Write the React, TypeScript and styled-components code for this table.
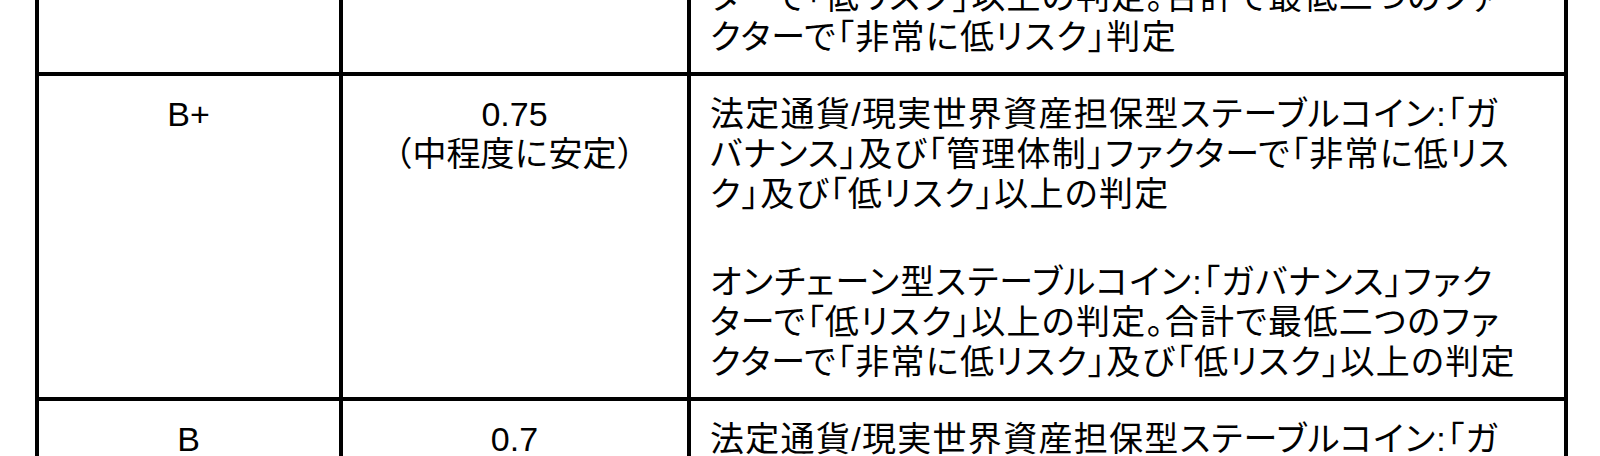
import React from "react";
import styled, { createGlobalStyle } from "styled-components";

type Row = {
  grade: string;
  value: string[];
  paragraphs: string[][];
};

const rows: Row[] = [
  {
    grade: "",
    value: [],
    paragraphs: [
      [
        "ターで「低リスク」以上の判定。合計で最低二つのファ",
        "クターで「非常に低リスク」判定",
      ],
    ],
  },
  {
    grade: "B+",
    value: ["0.75", "（中程度に安定）"],
    paragraphs: [
      [
        "法定通貨/現実世界資産担保型ステーブルコイン:「ガ",
        "バナンス」及び「管理体制」ファクターで「非常に低リス",
        "ク」及び「低リスク」以上の判定",
      ],
      [
        "オンチェーン型ステーブルコイン:「ガバナンス」ファク",
        "ターで「低リスク」以上の判定。合計で最低二つのファ",
        "クターで「非常に低リスク」及び「低リスク」以上の判定",
      ],
    ],
  },
  {
    grade: "B",
    value: ["0.7"],
    paragraphs: [["法定通貨/現実世界資産担保型ステーブルコイン:「ガ"]],
  },
];

const GlobalStyle = createGlobalStyle`
  body {
    margin: 0;
    background: #ffffff;
  }
`;

const Viewport = styled.div`
  height: 456px;
  overflow: hidden;
  background: #ffffff;
`;

const Table = styled.table`
  table-layout: fixed;
  width: 1533px;
  margin: -45px 0 0 35px;
  border-collapse: separate;
  border-spacing: 0;
  border-top: 4px solid #000;
  border-left: 4px solid #000;
  font-family: "Liberation Sans", "Noto Sans CJK JP", sans-serif;
  font-size: 34px;
  line-height: 40px;
  color: #000;
`;

const Cell = styled.td<{ $align?: "center" | "left"; $proportional?: boolean }>`
  box-sizing: border-box;
  vertical-align: top;
  text-align: ${(p) => p.$align ?? "left"};
  border-right: 4px solid #000;
  border-bottom: 4px solid #000;
  padding: 18px 20px 15px 19px;
  white-space: nowrap;
  font-feature-settings: ${(p) => (p.$proportional ? '"palt"' : "normal")};
  letter-spacing: ${(p) => (p.$proportional ? "1.3px" : "normal")};
`;

const Line = styled.div``;

const Paragraph = styled.div`
  & + & {
    margin-top: 48px;
  }
`;

export default function App() {
  return (
    <>
      <GlobalStyle />
      <Viewport>
        <Table>
          <colgroup>
            <col style={{ width: 304 }} />
            <col style={{ width: 348 }} />
            <col style={{ width: 877 }} />
          </colgroup>
          <tbody>
            {rows.map((row, i) => (
              <tr key={i}>
                <Cell $align="center">{row.grade}</Cell>
                <Cell $align="center">
                  {row.value.map((v) => (
                    <Line key={v}>{v}</Line>
                  ))}
                </Cell>
                <Cell $proportional>
                  {row.paragraphs.map((p, j) => (
                    <Paragraph key={j}>
                      {p.map((l) => (
                        <Line key={l}>{l}</Line>
                      ))}
                    </Paragraph>
                  ))}
                </Cell>
              </tr>
            ))}
          </tbody>
        </Table>
      </Viewport>
    </>
  );
}
